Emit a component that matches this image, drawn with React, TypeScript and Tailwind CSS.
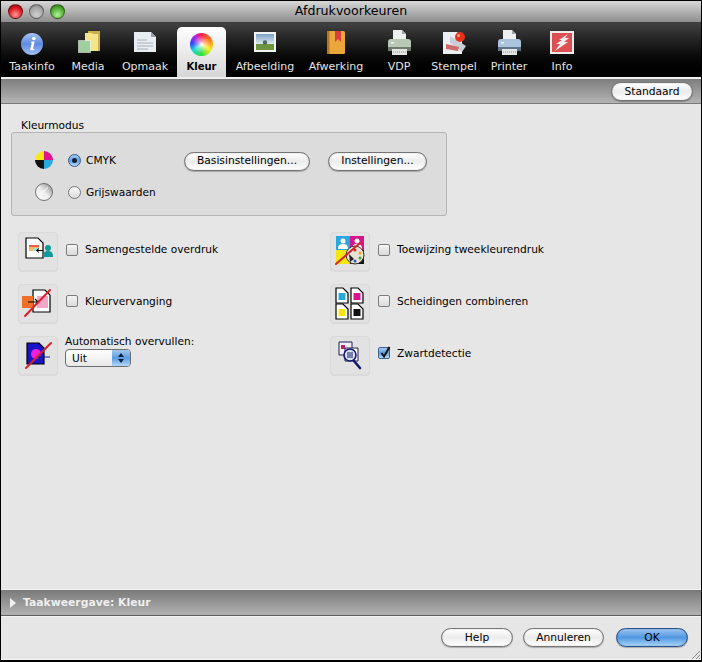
import React from "react";

//------------------------------------------------------------
function TrafficLight({ color }: { color: string }) {
    return <span className={`block w-[15px] h-[15px] rounded-full border border-black/40 ${color}`} />;
}

function InfoIcon() {
    return (
        <svg width="30" height="30" viewBox="0 0 30 30">
            <defs>
                <linearGradient id="ib" x1="0" y1="0" x2="0" y2="1">
                    <stop offset="0" stopColor="#a9c3f0" />
                    <stop offset="0.5" stopColor="#5f8ae0" />
                    <stop offset="1" stopColor="#a5c0f2" />
                </linearGradient>
            </defs>
            <circle cx="15" cy="15" r="11" fill="url(#ib)" />
            <path d="M14.5 12.5h3.2l-1.7 7.5h1.4l-.3 1.2h-4l1.6-7.4h-1.2z" fill="#fff" />
            <circle cx="16.8" cy="9.5" r="1.8" fill="#fff" />
        </svg>
    );
}

function MediaIcon() {
    return (
        <svg width="30" height="30" viewBox="0 0 30 30">
            <path d="M15 2h12v20H15z" fill="#c9b04a" />
            <path d="M12 4h7l1 1h5v17H12z" fill="#f4e58c" />
            <rect x="5.5" y="11.5" width="12" height="12" fill="#9fcf9f" stroke="#fff" strokeWidth="1" strokeDasharray="1 1" />
        </svg>
    );
}

function OpmaakIcon() {
    return (
        <svg width="30" height="30" viewBox="0 0 30 30">
            <path d="M4 3h17l5 5v15H4z" fill="#e9edf3" />
            <path d="M21 3l5 5h-5z" fill="#9aa0a8" />
            <path d="M7 11h10M7 14h16M7 17h16M7 20h11" stroke="#a9b0ba" strokeWidth="1" />
        </svg>
    );
}

function WheelIcon() {
    return (
        <span className="block w-[23px] h-[23px] rounded-full bg-[conic-gradient(#ff2040,#ff8a10_70deg,#f6ee20_120deg,#30e040_180deg,#20d8d8_235deg,#3048f0_275deg,#c020e0_325deg,#ff2040)] relative">
            <span className="absolute inset-0 rounded-full bg-[radial-gradient(circle,#ffffff_0%,#ffffff88_20%,#ffffff00_55%)]" />
        </span>
    );
}

function PictureIcon() {
    return (
        <svg width="30" height="30" viewBox="0 0 30 30">
            <defs>
                <linearGradient id="sky" x1="0" y1="0" x2="0" y2="1">
                    <stop offset="0" stopColor="#7da2c8" />
                    <stop offset="1" stopColor="#dfe9ee" />
                </linearGradient>
            </defs>
            <rect x="4" y="3" width="22" height="20" fill="#f2f4f2" />
            <rect x="6" y="5" width="18" height="10" fill="url(#sky)" />
            <rect x="6" y="15" width="18" height="6" fill="#6f9440" />
            <circle cx="15" cy="13.5" r="2.2" fill="#4d6a63" />
        </svg>
    );
}

function BookIcon() {
    return (
        <svg width="30" height="30" viewBox="0 0 30 30">
            <rect x="6" y="2" width="18" height="23" rx="1.5" fill="#eba83a" />
            <rect x="6" y="2" width="2.5" height="23" fill="#b8761c" />
            <path d="M14 2h6v11l-3-3-3 3z" fill="#d7403f" />
        </svg>
    );
}

function PrinterIcon({ body, dark }: { body: string; dark: string }) {
    return (
        <svg width="30" height="30" viewBox="0 0 30 30">
            <path d="M9 1h9l4 4v7H9z" fill="#eef0f0" />
            <path d="M18 1l4 4h-4z" fill="#9da3a6" />
            <rect x="4" y="10" width="23" height="12" rx="3" fill={body} />
            <rect x="4" y="18" width="23" height="4" fill={dark} />
            <rect x="8" y="20" width="15" height="6" fill="#e4e6e4" />
            <path d="M9 23h13" stroke="#8d9292" strokeWidth="1" strokeDasharray="1 1" />
            <rect x="7" y="13" width="3" height="1.5" fill="#f2f4f4" />
        </svg>
    );
}

function StampIcon() {
    return (
        <svg width="30" height="30" viewBox="0 0 30 30">
            <path d="M4 3h14l5 5v17H4z" fill="#eceff3" />
            <path d="M11 7l16 10-4 6-12-9z" fill="#c9ced6" />
            <path d="M7 15l13 3-1 4-12-2z" fill="#cf6a6a" />
            <circle cx="21" cy="8" r="5" fill="#e6331c" />
            <circle cx="19.5" cy="6.5" r="1.5" fill="#f8a08a" />
        </svg>
    );
}

function FieryIcon() {
    return (
        <svg width="30" height="30" viewBox="0 0 30 30">
            <rect x="3" y="2" width="24" height="23" fill="#f0ecec" />
            <rect x="5" y="4" width="20" height="19" fill="#dc5054" />
            <path d="M21 5l-9 6h3l-6 4h4l-5 7 13-9h-4l5-4h-4z" fill="#f8eeee" />
        </svg>
    );
}

const tabs = [
    { label: "Taakinfo", width: "w-[56px]", icon: <InfoIcon /> },
    { label: "Media", width: "w-[56px]", icon: <MediaIcon /> },
    { label: "Opmaak", width: "w-[58px] mr-[3px]", icon: <OpmaakIcon /> },
    { label: "Kleur", width: "w-[49px]", icon: <WheelIcon />, active: true },
    { label: "Afbeelding", width: "w-[78px]", icon: <PictureIcon /> },
    { label: "Afwerking", width: "w-[64px]", icon: <BookIcon /> },
    { label: "VDP", width: "w-[62px]", icon: <PrinterIcon body="#b9c8b4" dark="#6f7a6c" /> },
    { label: "Stempel", width: "w-[48px]", icon: <StampIcon /> },
    { label: "Printer", width: "w-[62px]", icon: <PrinterIcon body="#a9c2de" dark="#5f7288" /> },
    { label: "Info", width: "w-[44px]", icon: <FieryIcon /> },
];

//------------------------------------------------------------
function PillButton({ label, width, primary }: { label: string; width: string; primary?: boolean }) {
    const look = primary
        ? "border-[#27518f] bg-linear-to-b from-[#9cc4ee] via-[#4f97e2] to-[#a8d4f6]"
        : "border-[#757575] bg-linear-to-b from-white via-[#ececec] to-white";
    return (
        <button className={`${width} h-[19px] rounded-full border text-[10.7px] leading-[16px] text-black shadow-[0_1px_1px_rgba(0,0,0,0.25),inset_0_0_1px_rgba(0,0,0,0.5)] ${look}`}>
            {label}
        </button>
    );
}

function Radio({ checked }: { checked?: boolean }) {
    if (checked) {
        return (
            <span className="flex items-center justify-center w-[13px] h-[13px] rounded-full border border-[#35598f] bg-linear-to-b from-[#a9cbf0] via-[#5f9ee4] to-[#b4dcf8]">
                <span className="block w-[5px] h-[5px] rounded-full bg-[#10203a]" />
            </span>
        );
    }
    return <span className="block w-[13px] h-[13px] rounded-full border border-[#767676] bg-linear-to-b from-[#f8f8f8] to-[#dcdcdc]" />;
}

function Checkbox({ checked }: { checked?: boolean }) {
    if (checked) {
        return (
            <span className="relative block w-[12px] h-[12px] rounded-[2px] border border-[#3c5f94] bg-linear-to-b from-[#a9cbf0] via-[#5f9ee4] to-[#b4dcf8]">
                <svg className="absolute left-0 -top-[3px]" width="13" height="14" viewBox="0 0 13 14">
                    <path d="M2.5 8l2.5 3.5L10.5 2" fill="none" stroke="#111" strokeWidth="2" />
                </svg>
            </span>
        );
    }
    return <span className="block w-[12px] h-[12px] rounded-[2px] border border-[#7c7c7c] bg-linear-to-b from-[#f4f4f4] to-[#dadada]" />;
}

function CmykIcon() {
    return (
        <svg width="22" height="22" viewBox="0 0 22 22">
            <path d="M11 11V2a9 9 0 0 1 9 9z" fill="#e0148c" />
            <path d="M11 11H20a9 9 0 0 1-9 9z" fill="#27a9e1" />
            <path d="M11 11V20a9 9 0 0 1-9-9z" fill="#111" />
            <path d="M11 11H2a9 9 0 0 1 9-9z" fill="#f6e916" />
        </svg>
    );
}

function GrayIcon() {
    return (
        <svg width="22" height="22" viewBox="0 0 22 22">
            <defs>
                <linearGradient id="gr" x1="0" y1="1" x2="1" y2="0">
                    <stop offset="0" stopColor="#ffffff" />
                    <stop offset="0.5" stopColor="#ececec" />
                    <stop offset="1" stopColor="#808080" />
                </linearGradient>
            </defs>
            <circle cx="11" cy="11" r="8.5" fill="url(#gr)" stroke="#444" strokeWidth="0.7" />
            <path d="M5 16L15 6" stroke="#fff" strokeWidth="1.5" opacity="0.6" />
        </svg>
    );
}

function Doc({ x, y, w, h, fill = "#fff" }: { x: number; y: number; w: number; h: number; fill?: string }) {
    return <path d={`M${x} ${y}h${w - 5}l5 5v${h - 5}h-${w}z`} fill={fill} stroke="#000" strokeWidth="1.2" />;
}

function Slash({ d }: { d: string }) {
    return <path d={d} stroke="#d8202c" strokeWidth="2" strokeLinecap="round" fill="none" />;
}

function OverprintIcon() {
    return (
        <>
            <Doc x={8} y={6} w={17} h={20} />
            <rect x="11" y="13" width="10" height="6" fill="#f6b66a" />
            <rect x="11" y="13" width="10" height="2" fill="#e8604a" />
            <rect x="15" y="16" width="4" height="3" fill="#9adfe0" />
            <path d="M18 18.5h7M21 16.5l-2.5 2 2.5 2" stroke="#000" strokeWidth="1" fill="none" />
            <circle cx="30" cy="16" r="3" fill="#129a98" />
            <path d="M25 25c0-5 2-6 5-6s5 1 5 6z" fill="#129a98" />
        </>
    );
}

function ReplaceIcon() {
    return (
        <>
            <Doc x={15} y={6} w={17} h={22} />
            <rect x="4" y="12" width="11" height="12" fill="#f0702a" />
            <rect x="19" y="12" width="11" height="12" fill="#f2a6c8" />
            <path d="M10 18h10M17 15l3 3-3 3" stroke="#000" strokeWidth="1.2" fill="none" />
            <Slash d="M7 32L32 6" />
        </>
    );
}

function TrapIcon() {
    return (
        <>
            <Doc x={9} y={7} w={17} h={21} fill="#1a14c8" />
            <circle cx="18" cy="18" r="5" fill="#f01ee0" />
            <path d="M20 21h12M23 18l-3 3 3 3" stroke="#0f1f9a" strokeWidth="1.2" fill="none" />
            <Slash d="M8 32L33 7" />
        </>
    );
}

function DuotoneIcon() {
    return (
        <>
            <rect x="6" y="4" width="14" height="14" fill="#2aa7df" />
            <rect x="20" y="4" width="14" height="14" fill="#d9148a" />
            <rect x="6" y="18" width="14" height="14" fill="#f6e70e" />
            <rect x="20" y="18" width="14" height="14" fill="#111" />
            <circle cx="13" cy="9" r="2.5" fill="#fff" />
            <path d="M8 17c0-4 2-5 5-5s5 1 5 5z" fill="#fff" />
            <circle cx="27" cy="9" r="2.5" fill="#fff" />
            <path d="M22 17c0-4 2-5 5-5s5 1 5 5z" fill="#fff" />
            <circle cx="25" cy="23" r="9" fill="#e8e2d2" stroke="#333" strokeWidth="1" />
            <circle cx="25" cy="18" r="1.5" fill="#d8202c" />
            <circle cx="30" cy="21" r="1.5" fill="#e8a020" />
            <circle cx="30" cy="26" r="1.5" fill="#40a040" />
            <circle cx="25" cy="29" r="1.5" fill="#2060c0" />
            <path d="M19 22l5 5-4 3z" fill="#222" />
            <Slash d="M6 32L30 11" />
        </>
    );
}

function CombineIcon() {
    return (
        <>
            <Doc x={6} y={4} w={12} h={15} />
            <rect x="8.5" y="9" width="7" height="7" fill="#2aa7df" />
            <Doc x={21} y={4} w={12} h={15} />
            <rect x="23.5" y="9" width="7" height="7" fill="#d9148a" />
            <Doc x={6} y={20} w={12} h={15} />
            <rect x="8.5" y="25" width="7" height="7" fill="#f6e70e" />
            <Doc x={21} y={20} w={12} h={15} />
            <rect x="23.5" y="25" width="7" height="7" fill="#111" />
        </>
    );
}

function DetectIcon() {
    return (
        <>
            <path d="M9 6h13v13H9z" fill="#f2eef4" stroke="#1a2050" strokeWidth="1" />
            <rect x="11" y="9" width="4" height="4" fill="#b8206a" />
            <path d="M15 12h13v13H15z" fill="#fff" stroke="#1a2050" strokeWidth="1" />
            <path d="M24 25l6 7" stroke="#15186e" strokeWidth="2.6" strokeLinecap="round" />
            <circle cx="20" cy="19" r="6" fill="#d8e0ee" stroke="#15186e" strokeWidth="1.6" />
            <path d="M17 17h6M17 19h6M17 21h6" stroke="#15186e" strokeWidth="1" />
        </>
    );
}

function OptionIcon({ children }: { children: React.ReactNode }) {
    return (
        <span className="block w-[40px] h-[39px] shrink-0 rounded-[4px] border border-[#dadada] bg-[#e2e2e2] shadow-[0_1px_1px_rgba(0,0,0,0.06)]">
            <svg className="block -m-px" width="40" height="39" viewBox="0 0 40 39">
                {children}
            </svg>
        </span>
    );
}

function CheckOption({ icon, label, checked }: { icon: React.ReactNode; label: string; checked?: boolean }) {
    return (
        <div className="flex items-center">
            <OptionIcon>{icon}</OptionIcon>
            <div className="flex items-center gap-[7px] ml-[8px] pb-[3px]">
                <Checkbox checked={checked} />
                <span>{label}</span>
            </div>
        </div>
    );
}

//------------------------------------------------------------
export default function App() {
    return (
        <div className="flex flex-col w-[702px] h-[662px] overflow-hidden relative bg-[#e6e6e6] border-x border-t border-b-2 border-black text-[10.6px] text-black font-['DejaVu_Sans',sans-serif]">
            {/* TITLE BAR */}
            <div className="relative flex items-center justify-center h-[22px] shrink-0 bg-linear-to-b from-[#d8d8d8] to-[#8e8e8e] border-b border-[#3c3c3c]">
                <div className="absolute left-[7px] top-[3px] flex gap-[6px]">
                    <TrafficLight color="bg-[radial-gradient(circle_at_50%_75%,#ff9a9a,#d8141e_60%,#8a0a10)]" />
                    <TrafficLight color="bg-[radial-gradient(circle_at_50%_75%,#d0d0d0,#a6a6a6_60%,#7c7c7c)]" />
                    <TrafficLight color="bg-[radial-gradient(circle_at_50%_75%,#b4f29a,#4ea82c_60%,#2c6e16)]" />
                </div>
                <span className="text-[12.6px] text-black">Afdrukvoorkeuren</span>
            </div>

            {/* TABS */}
            <div className="flex items-end h-[54px] shrink-0 pl-[3px] bg-linear-to-b from-[#414141] to-black">
                {tabs.map((tab) => (
                    <div
                        key={tab.label}
                        className={`${tab.width} h-[50px] pt-[2px] flex flex-col items-center text-[11px] ${
                            tab.active ? "rounded-t-[5px] bg-linear-to-b from-white to-[#d6d6d6] text-black" : "text-[#e4e4e4]"
                        }`}
                    >
                        <span className="flex items-center justify-center h-[30px]">{tab.icon}</span>
                        <span className={`mt-[1px] leading-[14px] whitespace-nowrap ${tab.active ? "font-bold text-[10px]" : ""}`}>{tab.label}</span>
                    </div>
                ))}
            </div>

            {/* TOOLBAR */}
            <div className="flex items-center justify-end h-[27px] shrink-0 pr-[8px] pt-[1px] border-t-2 border-[#efefef] border-b border-b-[#7a7a7a] bg-linear-to-b from-[#7e7e7e] to-[#b4b4b4]">
                <PillButton label="Standaard" width="w-[82px]" />
            </div>

            {/* MAIN */}
            <div className="flex-1 pt-[15px]">
                <div className="ml-[20px] leading-[13px]">Kleurmodus</div>
                <div className="mx-[10px] w-[436px] h-[84px] pt-[18px] pl-[21px] rounded-[3px] border border-[#b4b4b4] bg-[#dcdcdc] flex flex-col gap-[12px]">
                    <div className="flex items-center h-[20px]">
                        <span className="mb-[2px]"><CmykIcon /></span>
                        <span className="ml-[13px] mr-[5px] mb-[2px]"><Radio checked /></span>
                        <span className="w-[98px]">CMYK</span>
                        <PillButton label="Basisinstellingen..." width="w-[126px]" />
                        <span className="w-[18px]" />
                        <PillButton label="Instellingen..." width="w-[99px]" />
                    </div>
                    <div className="flex items-center h-[20px]">
                        <span className="mb-[2px]"><GrayIcon /></span>
                        <span className="ml-[13px] mr-[5px] mb-[2px]"><Radio /></span>
                        <span>Grijswaarden</span>
                    </div>
                </div>

                <div className="grid grid-cols-[312px_1fr] gap-y-[12.5px] mt-[16px] ml-[17px]">
                    <CheckOption icon={<OverprintIcon />} label="Samengestelde overdruk" />
                    <CheckOption icon={<DuotoneIcon />} label="Toewijzing tweekleurendruk" />
                    <CheckOption icon={<ReplaceIcon />} label="Kleurvervanging" />
                    <CheckOption icon={<CombineIcon />} label="Scheidingen combineren" />
                    <div className="flex items-center">
                        <OptionIcon><TrapIcon /></OptionIcon>
                        <div className="ml-[7px] pb-[8px] flex flex-col">
                            <span className="leading-[13px]">Automatisch overvullen:</span>
                            <div className="flex mt-[1px] w-[66px] h-[18px] rounded-[4px] border border-[#6e6e6e] bg-linear-to-b from-white to-[#e8e8e8] overflow-hidden">
                                <span className="flex-1 pl-[6px] leading-[16px]">Uit</span>
                                <span className="w-[18px] flex items-center justify-center bg-linear-to-b from-[#a4c8ee] via-[#5a9ce4] to-[#b0d8f8]">
                                    <svg width="8" height="12" viewBox="0 0 8 12">
                                        <path d="M4 1l3 4H1zM4 11l3-4H1z" fill="#10203a" />
                                    </svg>
                                </span>
                            </div>
                        </div>
                    </div>
                    <CheckOption icon={<DetectIcon />} label="Zwartdetectie" checked />
                </div>
            </div>

            {/* JOB VIEW BAR */}
            <div className="flex items-center h-[27px] shrink-0 pl-[9px] border-t border-t-[#f4f4f4] border-b border-b-[#5e5e5e] bg-linear-to-b from-[#7a7a7a] to-[#b2b2b2]">
                <svg width="6" height="10" viewBox="0 0 6 10">
                    <path d="M0 0l6 5-6 5z" fill="#efefef" />
                </svg>
                <span className="ml-[7px] pt-[1px] font-bold text-[10.8px] text-[#efefef]">Taakweergave: Kleur</span>
            </div>

            {/* FOOTER */}
            <div className="flex justify-end h-[44px] shrink-0 pt-[11px] pr-[13px] gap-[10px] border-t border-t-[#f4f4f4] border-b border-b-[#f4f4f4]">
                <PillButton label="Help" width="w-[72px]" />
                <PillButton label="Annuleren" width="w-[81px] mr-[2px]" />
                <PillButton label="OK" width="w-[72px]" primary />
            </div>

            <svg className="absolute right-0 bottom-0" width="12" height="12" viewBox="0 0 12 12">
                <path d="M11 3l-8 8M11 7l-4 4M11 10l-1 1" stroke="#8a8a8a" strokeWidth="1" />
            </svg>
        </div>
    );
}
